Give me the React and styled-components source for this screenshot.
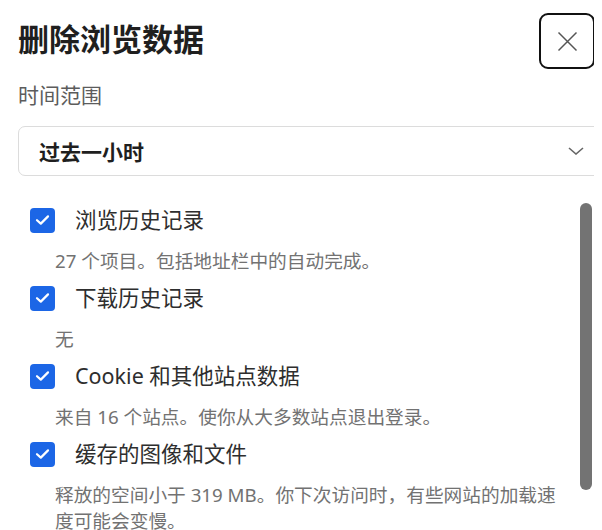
import React from "react";
import styled, { createGlobalStyle } from "styled-components";

const Global = createGlobalStyle`
  html, body { margin: 0; padding: 0; background: #fff; }
  body {
    font-family: "Noto Sans", "Noto Sans CJK SC", sans-serif;
    color: #1f1f1f;
    overflow: hidden;
  }
`;

const Dialog = styled.div`
  width: 594px;
  height: 530px;
  overflow: hidden;
  padding-left: 18px;
  box-sizing: border-box;
  position: relative;
`;

const Header = styled.div`
  display: flex;
  justify-content: space-between;
  align-items: flex-start;
  padding-top: 13px;
`;

const Title = styled.h1`
  margin: 5px 0 0;
  font-size: 31px;
  line-height: 40px;
  font-weight: 700;
  color: #1f1f1f;
  font-family: "Noto Sans CJK SC", sans-serif;
`;

const CloseButton = styled.button`
  width: 56px;
  height: 56px;
  margin-right: -1px;
  box-sizing: border-box;
  border: 2.5px solid #111;
  border-radius: 9px;
  background: #fff;
  display: flex;
  align-items: center;
  justify-content: center;
  padding: 0;
  cursor: pointer;
`;

const FieldLabel = styled.div`
  margin-top: 12px;
  font-size: 21px;
  line-height: 26px;
  color: #5c5c5c;
  font-family: "Noto Sans CJK SC", sans-serif;
`;

const Select = styled.div`
  margin-top: 19px;
  width: 600px;
  height: 50px;
  box-sizing: border-box;
  border: 1.5px solid #dcdcdc;
  border-radius: 7px;
  display: flex;
  align-items: center;
  padding-left: 20px;
  padding-right: 33px;
  justify-content: space-between;
`;

const SelectValue = styled.span`
  font-size: 21px;
  font-weight: 700;
  color: #1f1f1f;
  font-family: "Noto Sans CJK SC", sans-serif;
`;

const List = styled.div`
  margin-top: 31px;
  padding-left: 12px;
  position: relative;
`;

const Item = styled.div`
  display: flex;
  flex-direction: column;
  margin-bottom: 11px;
`;

const Row = styled.label`
  display: flex;
  align-items: center;
  gap: 20px;
  height: 26px;
`;

const Box = styled.span`
  width: 25px;
  height: 25px;
  border-radius: 4px;
  background: #1c66e6;
  display: flex;
  align-items: center;
  justify-content: center;
  flex-shrink: 0;
`;

const ItemLabel = styled.span`
  font-size: 21.5px;
  color: #2e2e2e;
  line-height: 26px;
`;

const Desc = styled.p`
  margin: 15px 0 0 25px;
  width: 504px;
  font-size: 18.7px;
  line-height: 26px;
  color: #727272;
`;

const Scrollbar = styled.div`
  position: absolute;
  left: 580px;
  top: 203px;
  width: 12px;
  height: 287px;
  border-radius: 6px;
  background: #737373;
`;

const items = [
  { label: "浏览历史记录", desc: "27 个项目。包括地址栏中的自动完成。" },
  { label: "下载历史记录", desc: "无" },
  { label: "Cookie 和其他站点数据", desc: "来自 16 个站点。使你从大多数站点退出登录。" },
  {
    label: "缓存的图像和文件",
    desc: "释放的空间小于 319 MB。你下次访问时，有些网站的加载速度可能会变慢。",
  },
];

const Check = () => (
  <svg width="15" height="12" viewBox="0 0 15 12" fill="none">
    <path d="M2 6.2 L5.8 9.6 L13 2.4" stroke="#fff" strokeWidth="2.2" strokeLinecap="round" strokeLinejoin="round" />
  </svg>
);

export default function App() {
  return (
    <>
      <Global />
      <Dialog>
        <Header>
          <Title>删除浏览数据</Title>
          <CloseButton aria-label="关闭">
            <svg width="21" height="21" viewBox="0 0 21 21">
              <path d="M1.5 1.5 L19.5 19.5 M19.5 1.5 L1.5 19.5" stroke="#555" strokeWidth="1.5" />
            </svg>
          </CloseButton>
        </Header>
        <FieldLabel>时间范围</FieldLabel>
        <Select>
          <SelectValue>过去一小时</SelectValue>
          <svg width="16" height="8" viewBox="0 0 16 8">
            <path d="M1 1 L8 7 L15 1" stroke="#666" strokeWidth="1.6" fill="none" />
          </svg>
        </Select>
        <List>
          {items.map((it) => (
            <Item key={it.label}>
              <Row>
                <Box>
                  <Check />
                </Box>
                <ItemLabel>{it.label}</ItemLabel>
              </Row>
              <Desc>{it.desc}</Desc>
            </Item>
          ))}
        </List>
        <Scrollbar />
      </Dialog>
    </>
  );
}
